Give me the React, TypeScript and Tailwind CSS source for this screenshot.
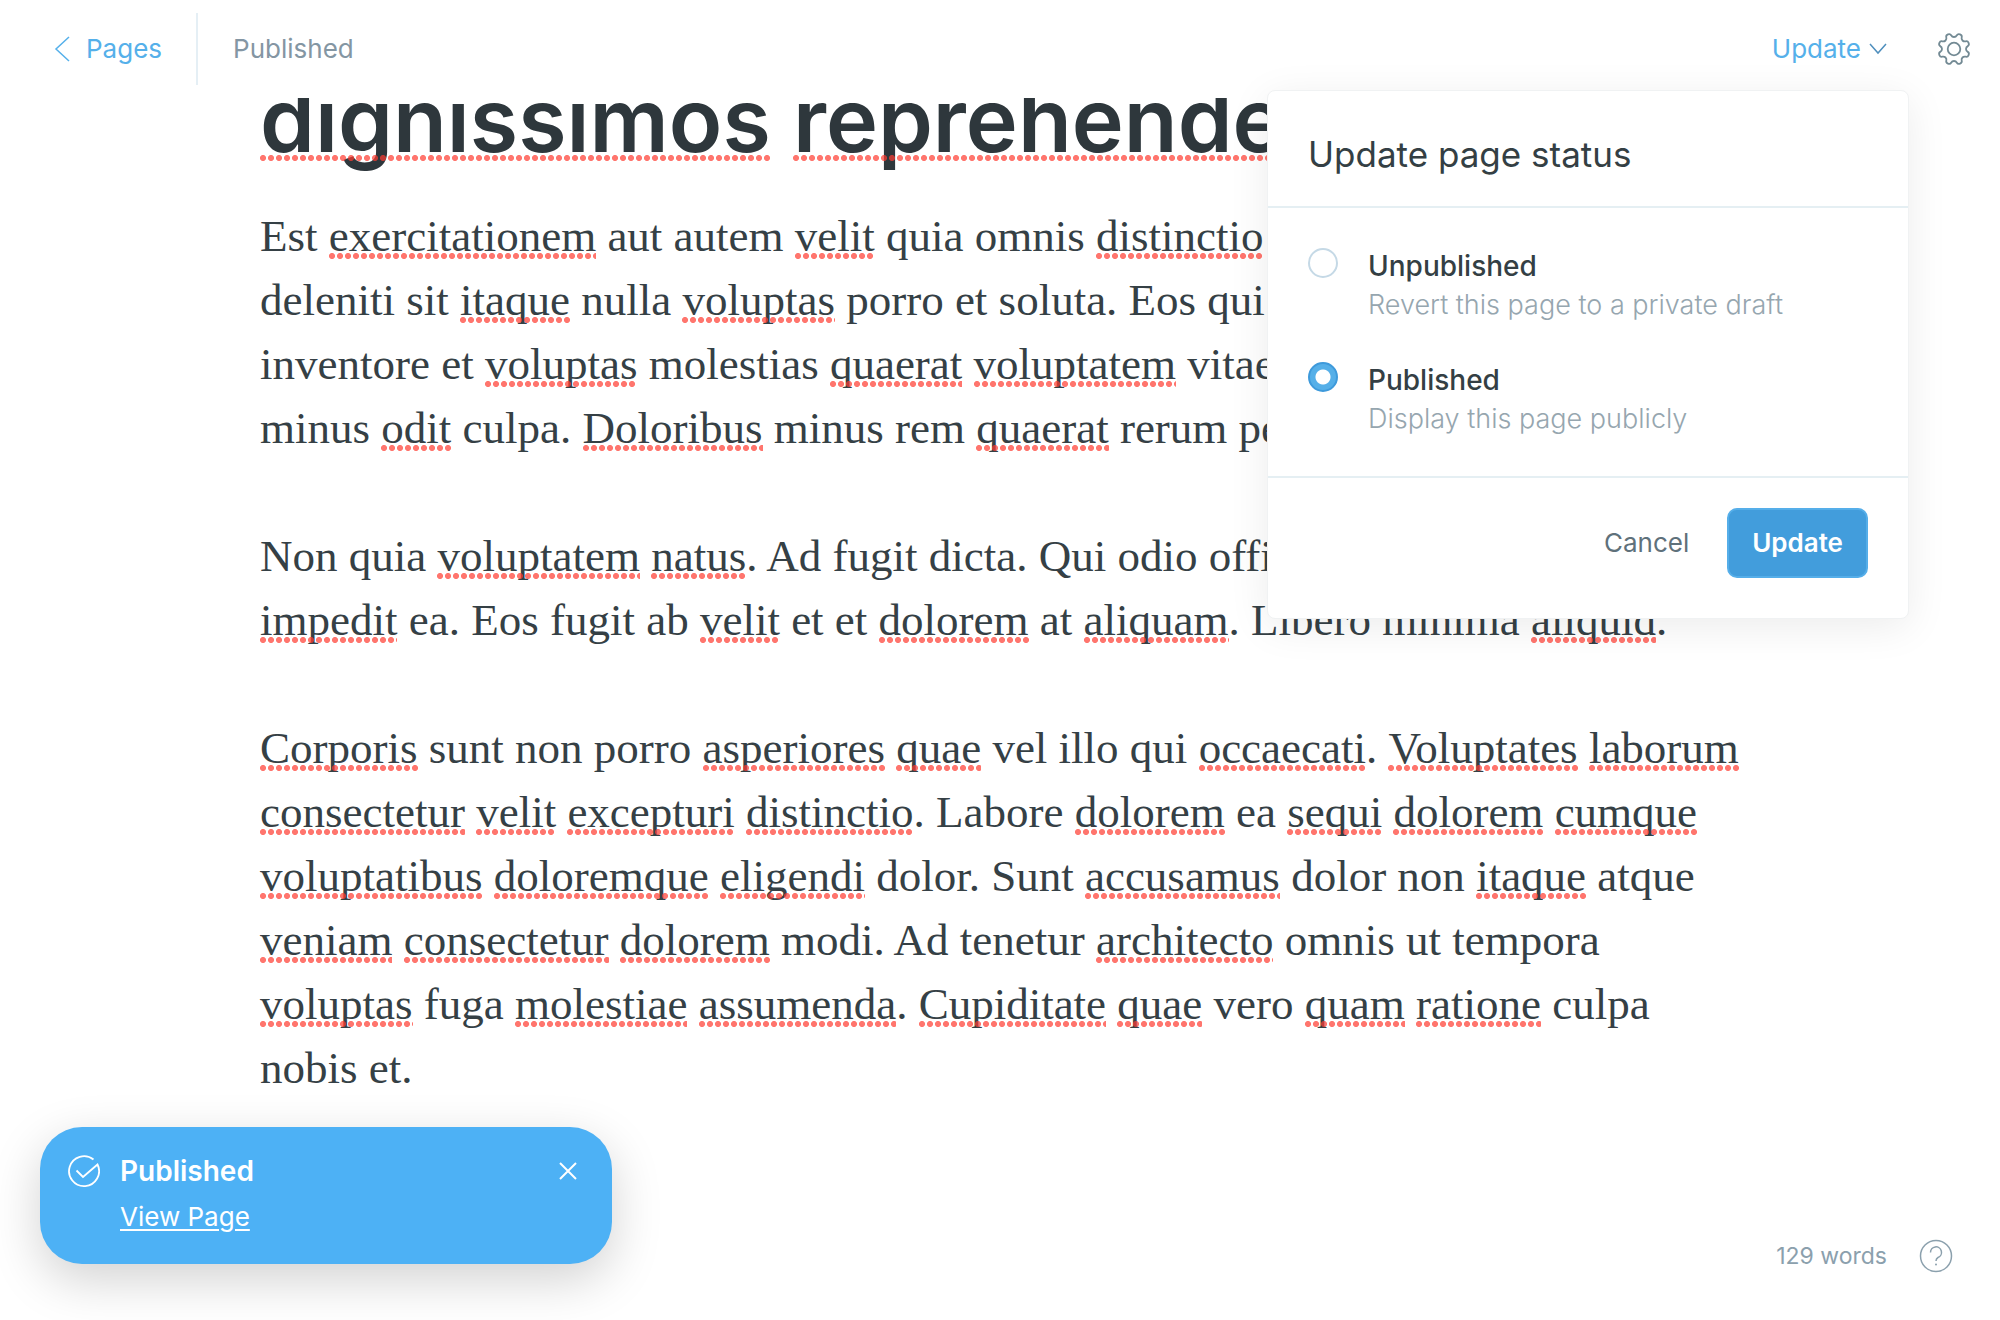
import React from "react";

const UI = "font-['Inter','Liberation_Sans',sans-serif]";

/** Renders text in which *starred* words carry a dotted spelling mark. */
function Flagged({ text }: { text: string }) {
  return (
    <>
      {text.split("*").map((part, i) =>
        i % 2 === 1 ? (
          <span
            key={i}
            className="relative inline-block after:absolute after:inset-x-0 after:bottom-[9px] after:h-[6px] after:bg-[radial-gradient(circle_at_3px_3px,#ff3b30b3_2.7px,transparent_3.3px)] after:bg-[length:8px_6px] after:bg-repeat-x after:content-['']"
          >
            {part}
          </span>
        ) : (
          <React.Fragment key={i}>{part}</React.Fragment>
        ),
      )}
    </>
  );
}

const paragraphs: string[][] = [
  [
    "Est *exercitationem* aut autem *velit* quia omnis *distinctio*",
    "deleniti sit *itaque* nulla *voluptas* porro et soluta. Eos qui",
    "inventore et *voluptas* molestias *quaerat* *voluptatem* vitae",
    "minus *odit* culpa. *Doloribus* minus rem *quaerat* rerum per",
  ],
  [
    "Non quia *voluptatem* *natus*. Ad fugit dicta. Qui odio officia",
    "*impedit* ea. Eos fugit ab *velit* et et *dolorem* at *aliquam*. Libero minima *aliquid*.",
  ],
  [
    "*Corporis* sunt non porro *asperiores* *quae* vel illo qui *occaecati*. *Voluptates* *laborum*",
    "*consectetur* *velit* *excepturi* *distinctio*. Labore *dolorem* ea *sequi* *dolorem* *cumque*",
    "*voluptatibus* *doloremque* *eligendi* dolor. Sunt *accusamus* dolor non *itaque* atque",
    "*veniam* *consectetur* *dolorem* modi. Ad tenetur *architecto* omnis ut tempora",
    "*voluptas* fuga *molestiae* *assumenda*. *Cupiditate* *quae* vero *quam* *ratione* culpa",
    "nobis et.",
  ],
];

/** Outline of an eight-toothed cog with rounded teeth, centred on (17, 17). */
function cogPath() {
  const at = (deg: number, r: number, along: number) => {
    const a = (deg * Math.PI) / 180;
    const x = 17 + r * Math.cos(a) - along * Math.sin(a);
    const y = 17 + r * Math.sin(a) + along * Math.cos(a);
    return `${x.toFixed(2)} ${y.toFixed(2)}`;
  };
  const valley = 12;
  const tip = 15.8;
  let d = `M${at(0, valley, 0)}`;
  for (let k = 0; k < 8; k++) {
    const v = k * 45;
    d += `C${at(v, valley, 4)} ${at(v + 22.5, tip, -4.5)} ${at(v + 22.5, tip, 0)}`;
    d += `C${at(v + 22.5, tip, 4.5)} ${at(v + 45, valley, -4)} ${at(v + 45, valley, 0)}`;
  }
  return d + "Z";
}

function Option({ id, label, hint, checked = false }: { id: string; label: string; hint: string; checked?: boolean }) {
  return (
    <div className="flex gap-[30px]">
      <input
        type="radio"
        name="status"
        id={id}
        defaultChecked={checked}
        aria-describedby={id + "-hint"}
        className="size-[30px] shrink-0 appearance-none rounded-full border-2 border-[#c5d9e6] bg-white checked:border-[#3e9adb] checked:bg-[radial-gradient(circle,#fff_7px,#55afe8_8px)]"
      />
      <div>
        <label htmlFor={id} className="block text-[28px] leading-[36px] font-medium text-[#343f44]">
          {label}
        </label>
        <p id={id + "-hint"} className="text-[27px] leading-[42px] font-light text-[#96a6af]">
          {hint}
        </p>
      </div>
    </div>
  );
}

export default function App() {
  return (
    <div className={"relative flex h-screen flex-col overflow-hidden bg-white " + UI}>
      <header className="flex h-[98px] shrink-0 items-center pr-[29px] pl-[54px] text-[26px] leading-[32px]">
        <a href="#pages" className="flex items-center gap-[16px] text-[#55b0ea]">
          <svg width="16" height="26" viewBox="0 0 16 26" fill="none" stroke="currentColor" strokeWidth="1.5">
            <path d="M15 1 2 13l13 12" />
          </svg>
          Pages
        </a>
        <div className="mr-[35px] ml-[34px] h-[72px] w-[2px] bg-[#e5eff5]" />
        <span className="text-[#8496a3]">Published</span>
        <div className="ml-auto flex items-center gap-[50px]">
          <button className="flex items-center gap-[8px] text-[#55b0ea]">
            Update
            <svg width="18" height="12" viewBox="0 0 18 12" fill="none" stroke="#4f8fbd" strokeWidth="1.5">
              <path d="m1 1 8 9 8-9" />
            </svg>
          </button>
          <button aria-label="Settings" className="text-[#738a94]">
            <svg width="34" height="34" viewBox="0 0 34 34" fill="none" stroke="currentColor" strokeWidth="1.8">
              <circle cx="17" cy="17" r="6.3" />
              <path d={cogPath()} />
            </svg>
          </button>
        </div>
      </header>

      <main className="flex-1 overflow-hidden pr-[240px] pl-[260px] whitespace-nowrap">
        <h1 className="-mt-[28px] text-[88px] leading-[100px] font-semibold text-[#2e373c]">
          <Flagged text="*dignissimos* *reprehenderit*" />
        </h1>
        <div className="mt-[34px] flex flex-col gap-[64px] font-['Liberation_Serif',serif] text-[45px] leading-[64px] text-[#354045]">
          {paragraphs.map((lines, i) => (
            <p key={i}>
              {lines.map((line) => (
                <span key={line} className="block">
                  <Flagged text={line} />
                </span>
              ))}
            </p>
          ))}
        </div>
      </main>

      <form
        aria-labelledby="status-title"
        className="absolute top-[90px] right-[91px] w-[642px] rounded-[8px] border border-[#f0f2f3] bg-white shadow-[0_8px_40px_rgba(0,0,0,0.08)]"
      >
        <h2 id="status-title" className="px-[40px] pt-[39px] pb-[28px] text-[35px] leading-[48px] text-[#343f44]">
          Update page status
        </h2>
        <div className="flex flex-col gap-[36px] border-y-2 border-[#e5eff3] px-[40px] pt-[40px] pb-[36px]">
          <Option id="unpublished" label="Unpublished" hint="Revert this page to a private draft" />
          <Option id="published" label="Published" hint="Display this page publicly" checked />
        </div>
        <div className="flex items-center justify-end gap-[38px] px-[40px] pt-[30px] pb-[40px] text-[26px] leading-[32px]">
          <button type="button" className="text-[#5f717b]">
            Cancel
          </button>
          <button type="button" className="h-[70px] rounded-[10px] border-2 border-[#55aee9] bg-[#429ddc] px-[23px] font-semibold text-white">
            Update
          </button>
        </div>
      </form>

      <div
        role="status"
        className="absolute bottom-[56px] left-[40px] flex w-[572px] items-start rounded-[42px] bg-[#4db1f5] px-[28px] pt-[27px] pb-[29px] text-white shadow-[0_16px_50px_rgba(0,0,0,0.18)]"
      >
        <svg className="mr-[20px]" width="32" height="34" viewBox="0 0 32 34" fill="none" stroke="currentColor" strokeWidth="1.8">
          <path d="M25.500 5.500A15 15 0 1 0 29.500 10.500L15 23 8.500 16.500" />
        </svg>
        <div>
          <p className="text-[28px] leading-[34px] font-semibold">Published</p>
          <a href="#view" className="mt-[11px] block text-[26px] leading-[36px] underline decoration-2 underline-offset-[3px]">
            View Page
          </a>
        </div>
        <button aria-label="Close" className="mt-[8px] mr-[7px] ml-auto">
          <svg width="18" height="18" viewBox="0 0 18 18" fill="none" stroke="currentColor" strokeWidth="2">
            <path d="m1 1 16 16M17 1 1 17" />
          </svg>
        </button>
      </div>

      <div className="absolute right-[47px] bottom-[47px] flex items-center gap-[32px] text-[23px] leading-[32px] text-[#8ba0ad]">
        129 words
        <button aria-label="Help">
          <svg width="34" height="34" viewBox="0 0 34 34" fill="none" stroke="currentColor" strokeWidth="1.5">
            <circle cx="17" cy="17" r="15.500" />
            <path d="M11.500 13.500a5.500 5.500 0 1 1 7.500 5c-1.500.8-2 1.500-2 3.500" />
            <circle cx="17" cy="25.500" r="1" fill="currentColor" stroke="none" />
          </svg>
        </button>
      </div>
    </div>
  );
}
